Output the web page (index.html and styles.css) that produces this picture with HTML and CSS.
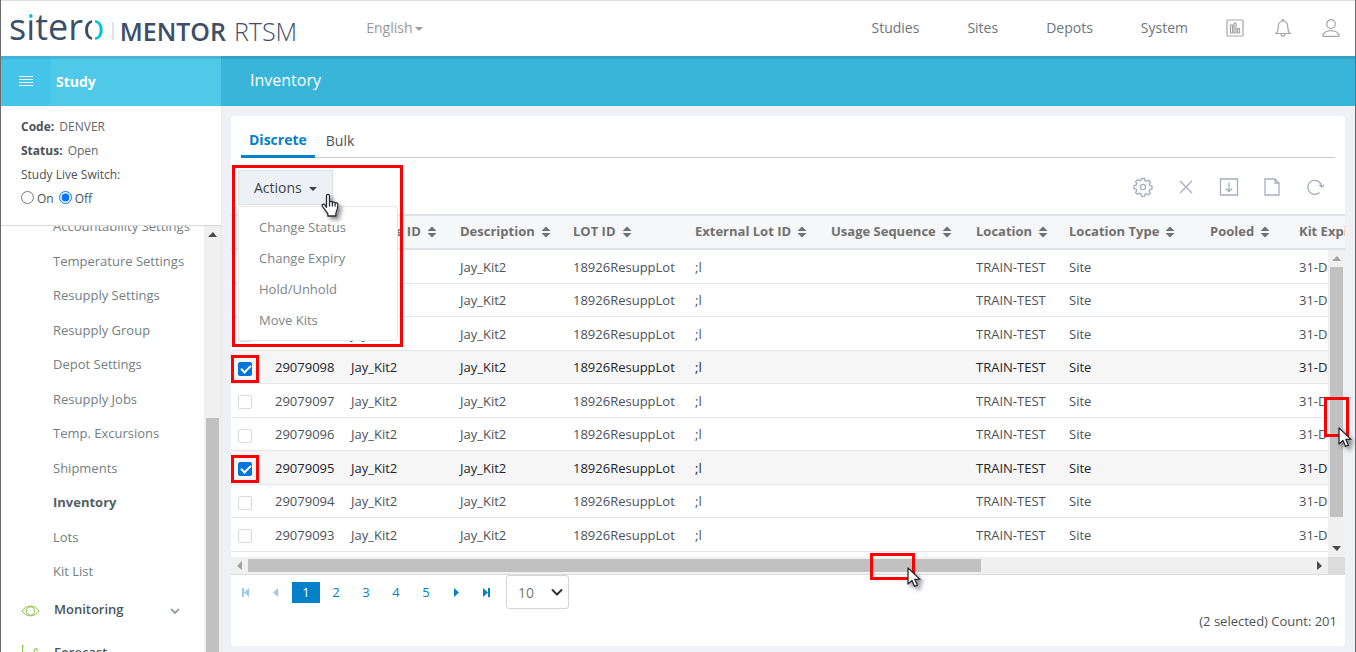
FILE: index.html
```html
<!DOCTYPE html>
<html lang="en">
  <head>
    <meta charset="UTF-8" />
    <meta name="viewport" content="width=device-width, initial-scale=1.0" />
    <title>Inventory | Mentor RTSM</title>
    <link rel="stylesheet" href="styles.css">
  </head>
  <body>
    <svg class="sprite" aria-hidden="true">
      <symbol id="sort" viewBox="0 0 10 12">
        <path d="M5 0.5 9.5 5H0.5zM5 11.5 9.5 7H0.5z" fill="currentColor" />
      </symbol>
      <symbol id="arrow-cursor" viewBox="0 0 14 21">
        <path d="M1 1v16l4-3.6 2.6 6 2.8-1.2-2.6-5.8H13z" fill="#fff" stroke="#2b2b3a" stroke-width="1.3" stroke-linejoin="round" />
      </symbol>
    </svg>

    <header class="top-bar">
      <a class="logo" href="#">
        <span class="logo-name">s<span class="logo-i">i</span>ter<span class="logo-o">o</span></span>
        <span class="logo-line"></span>
        <span class="logo-product"><b>MENTOR</b><span>RTSM</span></span>
      </a>
      <button class="language">English<span class="caret"></span></button>
      <nav class="top-nav">
        <a href="#">Studies</a>
        <a href="#">Sites</a>
        <a href="#">Depots</a>
        <a href="#">System</a>
      </nav>
      <div class="top-icons">
        <button aria-label="Reports">
          <svg width="18" height="18" viewBox="0 0 18 18"><rect x="1" y="1" width="16" height="16" rx="1" /><path d="M4.5 6h2v8h-2zM8 4h2v10H8zM11.5 9.500h2V14h-2z" /></svg>
        </button>
        <button aria-label="Notifications">
          <svg width="16" height="20" viewBox="0 0 16 20"><path d="M1 15.500h14c-1.800-1.600-2.200-3-2.200-6.500 0-3.600-1.600-6-4.800-6S3.200 5.400 3.200 9c0 3.500-.4 4.900-2.200 6.500zM6 15.500c0 3.600 4 3.600 4 0M7 3c0-2 2-2 2 0" /></svg>
        </button>
        <button aria-label="Account">
          <svg width="18" height="18" viewBox="0 0 18 18"><circle cx="9" cy="5" r="4.300" /><path d="M1 17.300c0-7.600 16-7.600 16 0z" /></svg>
        </button>
      </div>
    </header>

    <div class="title-bar">
      <button class="menu-btn" aria-label="Toggle menu">
        <svg width="14" height="12" viewBox="0 0 14 12"><path d="M0 1.500h14M0 4.500h14M0 7.500h14M0 10.500h14" /></svg>
      </button>
      <h2>Study</h2>
      <h1>Inventory</h1>
    </div>

    <div class="layout">
      <aside class="sidebar">
        <div class="study-info">
          <p><b>Code:</b> <span>DENVER</span></p>
          <p><b>Status:</b> <span>Open</span></p>
          <p>Study Live Switch:</p>
          <div class="switch">
            <input type="radio" name="live" id="liveOn" /><label for="liveOn">On</label>
            <input type="radio" name="live" id="liveOff" checked /><label for="liveOff">Off</label>
          </div>
        </div>
        <div class="side-scroll">
          <div class="side-menu">
            <ul>
              <li><a href="#">Accountability Settings</a></li>
              <li><a href="#">Temperature Settings</a></li>
              <li><a href="#">Resupply Settings</a></li>
              <li><a href="#">Resupply Group</a></li>
              <li><a href="#">Depot Settings</a></li>
              <li><a href="#">Resupply Jobs</a></li>
              <li><a href="#">Temp. Excursions</a></li>
              <li><a href="#">Shipments</a></li>
              <li><a class="active" href="#">Inventory</a></li>
              <li><a href="#">Lots</a></li>
              <li><a href="#">Kit List</a></li>
            </ul>
            <a class="side-group" href="#">
              <svg class="group-icon" width="19" height="12" viewBox="0 0 19 12"><path d="M1 6c4.500-6.500 12.500-6.500 17 0-4.500 6.500-12.500 6.500-17 0z" /><circle cx="9.500" cy="6" r="4.200" /></svg>
              <span>Monitoring</span>
              <svg class="chevron" width="10" height="6" viewBox="0 0 10 6"><path d="M1 1l4 4 4-4" /></svg>
            </a>
            <a class="side-group" href="#">
              <svg class="group-icon" width="19" height="18" viewBox="0 0 19 18"><path d="M1.500 0v17h16M1 1h2M2 14l5 2 4-3 3-9M13 4.500l3-1v3" /></svg>
              <span>Forecast</span>
            </a>
          </div>
          <div class="v-scroll" aria-hidden="true">
            <span class="arrow up"></span>
            <span class="side-thumb"></span>
          </div>
        </div>
      </aside>

      <main class="content">
        <section class="panel">
          <div class="tabs">
            <button class="tab active">Discrete</button>
            <button class="tab">Bulk</button>
          </div>

          <div class="toolbar">
            <div class="actions">
              <button class="actions-btn">Actions <span class="caret"></span></button>
              <div class="dropdown">
                <a href="#">Change Status</a>
                <a href="#">Change Expiry</a>
                <a href="#">Hold/Unhold</a>
                <a href="#">Move Kits</a>
              </div>
              <span class="mark mark-actions"></span>
              <svg class="cursor hand" width="18" height="25" viewBox="0 0 18 25"><path d="M5.500 14.500V3c0-2.300 3-2.300 3 0v6.500c.3-1.500 2.700-1.400 2.900.3.500-1.200 2.500-1 2.700.5.600-1 2.700-.6 2.700 1.200 0 4.500-.6 6.300-1.900 8.500V23H6.800v-2.500C5 18 3 16 1.400 13.400c-.9-1.700 1.200-3.200 2.500-1.500zM8.500 9.500v4M11.400 10v3.500M14.100 10.500v3" fill="#fff" stroke="#2b2b3a" stroke-width="1.300" stroke-linejoin="round" /></svg>
            </div>
            <div class="tools">
              <button aria-label="Settings">
                <svg width="20" height="20" viewBox="0 0 20 20"><circle cx="10" cy="10" r="2.600" /><path d="M8.500 1.500h3l.5 2.200 1.400.6 2-1.200 2 2-1.200 2 .6 1.400 2.200.5v3l-2.200.5-.6 1.400 1.200 2-2 2-2-1.200-1.400.6-.5 2.200h-3L8 16.800l-1.400-.6-2 1.200-2-2 1.200-2-.6-1.400L1 11.500v-3L3.200 8l.6-1.400-1.200-2 2-2 2 1.200L8 3.200z" /></svg>
              </button>
              <button aria-label="Clear">
                <svg width="20" height="20" viewBox="0 0 20 20"><path d="M4 4l12 12M16 4L4 16" /></svg>
              </button>
              <button aria-label="Download">
                <svg width="20" height="20" viewBox="0 0 20 20"><path d="M1.500 2h17v16h-17zM10 5.500v9M6.800 11.500l3.200 3 3.200-3" /></svg>
              </button>
              <button aria-label="New document">
                <svg width="20" height="20" viewBox="0 0 20 20"><path d="M3 2h10l4 4v12H3zM13 2v4h4" /></svg>
              </button>
              <button aria-label="Refresh">
                <svg width="20" height="20" viewBox="0 0 20 20"><path d="M14.500 15.500a7 7 0 1 1 2.200-6.200M14.200 8l2.600 2.200L19 7.600" /></svg>
              </button>
            </div>
          </div>

          <div class="grid-head">
            <table>
              <colgroup><col class="c-check" /><col class="c-kit" /><col class="c-type" /><col class="c-desc" /><col class="c-lot" /><col class="c-ext" /><col class="c-usage" /><col class="c-loc" /><col class="c-loctype" /><col class="c-pooled" /><col class="c-expiry" /></colgroup>
              <thead>
                <tr>
                  <th></th>
                  <th>Kit ID</th>
                  <th>Kit Type ID<svg class="sort"><use href="#sort" /></svg></th>
                  <th>Description<svg class="sort"><use href="#sort" /></svg></th>
                  <th>LOT ID<svg class="sort"><use href="#sort" /></svg></th>
                  <th>External Lot ID<svg class="sort"><use href="#sort" /></svg></th>
                  <th>Usage Sequence<svg class="sort"><use href="#sort" /></svg></th>
                  <th>Location<svg class="sort"><use href="#sort" /></svg></th>
                  <th>Location Type<svg class="sort"><use href="#sort" /></svg></th>
                  <th>Pooled<svg class="sort"><use href="#sort" /></svg></th>
                  <th>Kit Expiry</th>
                </tr>
              </thead>
            </table>
          </div>

          <div class="grid-body">
            <div class="grid-view">
              <table>
                <colgroup><col class="c-check" /><col class="c-kit" /><col class="c-type" /><col class="c-desc" /><col class="c-lot" /><col class="c-ext" /><col class="c-usage" /><col class="c-loc" /><col class="c-loctype" /><col class="c-pooled" /><col class="c-expiry" /></colgroup>
                <tbody>
                  <tr>
                    <td><input type="checkbox" aria-label="Select 29079101" /></td>
                    <td>29079101</td><td>Jay_Kit2</td><td>Jay_Kit2</td><td>18926ResuppLot</td><td>;l</td><td></td><td>TRAIN-TEST</td><td>Site</td><td></td><td>31-Dec</td>
                  </tr>
                  <tr>
                    <td><input type="checkbox" aria-label="Select 29079100" /></td>
                    <td>29079100</td><td>Jay_Kit2</td><td>Jay_Kit2</td><td>18926ResuppLot</td><td>;l</td><td></td><td>TRAIN-TEST</td><td>Site</td><td></td><td>31-Dec</td>
                  </tr>
                  <tr>
                    <td><input type="checkbox" aria-label="Select 29079099" /></td>
                    <td>29079099</td><td>Jay_Kit2</td><td>Jay_Kit2</td><td>18926ResuppLot</td><td>;l</td><td></td><td>TRAIN-TEST</td><td>Site</td><td></td><td>31-Dec</td>
                  </tr>
                  <tr class="selected">
                    <td><input type="checkbox" aria-label="Select 29079098" checked /><span class="mark mark-check"></span></td>
                    <td>29079098</td><td>Jay_Kit2</td><td>Jay_Kit2</td><td>18926ResuppLot</td><td>;l</td><td></td><td>TRAIN-TEST</td><td>Site</td><td></td><td>31-Dec</td>
                  </tr>
                  <tr>
                    <td><input type="checkbox" aria-label="Select 29079097" /></td>
                    <td>29079097</td><td>Jay_Kit2</td><td>Jay_Kit2</td><td>18926ResuppLot</td><td>;l</td><td></td><td>TRAIN-TEST</td><td>Site</td><td></td><td>31-Dec</td>
                  </tr>
                  <tr>
                    <td><input type="checkbox" aria-label="Select 29079096" /></td>
                    <td>29079096</td><td>Jay_Kit2</td><td>Jay_Kit2</td><td>18926ResuppLot</td><td>;l</td><td></td><td>TRAIN-TEST</td><td>Site</td><td></td><td>31-Dec</td>
                  </tr>
                  <tr class="selected">
                    <td><input type="checkbox" aria-label="Select 29079095" checked /><span class="mark mark-check"></span></td>
                    <td>29079095</td><td>Jay_Kit2</td><td>Jay_Kit2</td><td>18926ResuppLot</td><td>;l</td><td></td><td>TRAIN-TEST</td><td>Site</td><td></td><td>31-Dec</td>
                  </tr>
                  <tr>
                    <td><input type="checkbox" aria-label="Select 29079094" /></td>
                    <td>29079094</td><td>Jay_Kit2</td><td>Jay_Kit2</td><td>18926ResuppLot</td><td>;l</td><td></td><td>TRAIN-TEST</td><td>Site</td><td></td><td>31-Dec</td>
                  </tr>
                  <tr>
                    <td><input type="checkbox" aria-label="Select 29079093" /></td>
                    <td>29079093</td><td>Jay_Kit2</td><td>Jay_Kit2</td><td>18926ResuppLot</td><td>;l</td><td></td><td>TRAIN-TEST</td><td>Site</td><td></td><td>31-Dec</td>
                  </tr>
                </tbody>
              </table>
            </div>
            <div class="v-scroll" aria-hidden="true">
              <span class="arrow up dim"></span>
              <span class="grid-thumb">
                <span class="mark mark-v"></span>
                <svg class="cursor cursor-v" width="14" height="21"><use href="#arrow-cursor" /></svg>
              </span>
              <span class="arrow down"></span>
            </div>
          </div>

          <div class="h-scroll" aria-hidden="true">
            <span class="arrow left dim"></span>
            <div class="h-track">
              <span class="h-thumb">
                <span class="mark mark-h"></span>
                <svg class="cursor cursor-h" width="14" height="21"><use href="#arrow-cursor" /></svg>
              </span>
            </div>
            <span class="arrow right"></span>
            <span class="corner"></span>
          </div>

          <div class="pager">
            <button class="off" aria-label="First page"><svg width="8" height="9" viewBox="0 0 8 9"><path d="M0 0h2v9H0zM7 0v9L2 4.500z" /></svg></button>
            <button class="off" aria-label="Previous page"><svg width="8" height="9" viewBox="0 0 8 9"><path d="M6 0v9L1 4.500z" /></svg></button>
            <button class="current">1</button>
            <button>2</button>
            <button>3</button>
            <button>4</button>
            <button>5</button>
            <button aria-label="Next page"><svg width="8" height="9" viewBox="0 0 8 9"><path d="M2 0v9l5-4.500z" /></svg></button>
            <button aria-label="Last page"><svg width="8" height="9" viewBox="0 0 8 9"><path d="M6 0h2v9H6zM1 0v9l5-4.500z" /></svg></button>
            <div class="page-size">
              <select aria-label="Rows per page">
                <option>10</option>
                <option>25</option>
                <option>50</option>
              </select>
              <svg width="12" height="8" viewBox="0 0 12 8"><path d="M1 1.500l5 5 5-5" /></svg>
            </div>
          </div>
          <p class="count">(2 selected) Count: 201</p>
        </section>
      </main>
    </div>
  </body>
</html>
```
FILE: styles.css
```css
* {
  margin: 0;
  padding: 0;
  box-sizing: border-box;
}
body {
  display: flex;
  flex-direction: column;
  height: 100vh;
  overflow: hidden;
  background: #eff1f6;
  border-left: 1px solid #6b6b6b;
  border-right: 1px solid #6b6b6b;
  color: #4c5257;
  font-family: "Open Sans", sans-serif;
  font-size: 13px;
}
button,
select {
  font: inherit;
  color: inherit;
  background: none;
  border: none;
  cursor: pointer;
}
a {
  color: inherit;
  text-decoration: none;
}
ul {
  list-style: none;
}
svg {
  display: block;
  fill: none;
}
.sprite {
  position: absolute;
  width: 0;
  height: 0;
}
.caret {
  display: inline-block;
  border: 4px solid transparent;
  border-top-color: currentColor;
  border-bottom: none;
  vertical-align: middle;
}

/* header */
.top-bar {
  display: flex;
  align-items: center;
  flex-shrink: 0;
  height: 56px;
  padding: 0 15px 2px 8px;
  background: #fff;
  border-top: 1px solid #dedede;
  color: #6c757d;
  font-size: 14px;
}
.logo {
  display: flex;
  align-items: center;
  padding-top: 2px;
  color: #3b5068;
}
.logo-name {
  padding-bottom: 4px;
  font-size: 36px;
  font-weight: 500;
  line-height: 44px;
}
.logo-i,
.logo-o {
  color: transparent;
  -webkit-background-clip: text;
  background-clip: text;
}
.logo-i {
  background-image: linear-gradient(#00c4d4 38%, #3b5068 38%);
}
.logo-o {
  background-image: linear-gradient(90deg, #3b5068 42%, transparent 42% 55%, #00c4d4 55%);
}
.logo-line {
  width: 2px;
  height: 18px;
  margin: 4px 6px 0 7px;
  background: #e3e3e3;
}
.logo-product {
  display: flex;
  gap: 8px;
  padding-top: 4px;
  font-size: 25px;
  line-height: 34px;
}
.logo-product b {
  font-weight: 600;
}
.logo-product span {
  font-weight: 300;
}
.language {
  margin-left: 69px;
  color: #999;
}
.language .caret {
  margin-left: 2px;
}
.top-nav {
  display: flex;
  gap: 48px;
  margin-left: auto;
}
.top-icons {
  display: flex;
  align-items: center;
  gap: 31px;
  margin-left: 38px;
}
.top-icons svg {
  stroke: #a5a5a5;
  stroke-width: 1.2;
}

/* title bar */
.title-bar {
  display: flex;
  align-items: center;
  flex-shrink: 0;
  height: 50px;
  background: #38b5d9;
  box-shadow: inset 0 3px 0 #34a2c3;
  color: #fff;
}
.menu-btn {
  width: 50px;
  height: 50px;
  padding: 0 18px;
  background: #44c4e9;
  box-shadow: inset 0 3px 0 #3fb4d5;
}
.menu-btn svg {
  stroke: #fff;
}
.title-bar h2 {
  width: 170px;
  height: 50px;
  padding: 1px 0 0 5px;
  background: #50c8e8;
  box-shadow: inset 0 3px 0 #48b5d2;
  font-size: 14px;
  line-height: 50px;
}
.title-bar h1 {
  padding: 0 0 2px 29px;
  font-size: 16px;
  font-weight: 400;
}

/* sidebar */
.layout {
  display: flex;
  flex: 1;
  min-height: 0;
}
.sidebar {
  display: flex;
  flex-direction: column;
  flex-shrink: 0;
  width: 220px;
  background: #fff;
}
.study-info {
  height: 120px;
  padding: 9px 20px 0;
  border-bottom: 1px solid #d9d9d9;
  font-size: 12px;
  line-height: 24px;
}
.study-info span {
  margin-left: 2px;
  color: #666;
}
.switch {
  display: flex;
  align-items: center;
}
.switch input {
  width: 13px;
  height: 13px;
  margin: 0 3px 4px 0;
  accent-color: #0075ff;
}
.switch label {
  margin-right: 5px;
}
.side-scroll {
  display: flex;
  flex: 1;
  min-height: 0;
}
.side-menu {
  flex: 1;
  overflow: hidden;
  color: #73807f;
}
.side-menu ul {
  margin-top: -17px;
}
.side-menu li {
  height: 34px;
  padding-left: 52px;
  line-height: 34px;
}
.side-menu li:nth-child(odd) {
  height: 35px;
}
.side-menu .active {
  color: #55605f;
  font-weight: 700;
}
.side-group {
  display: flex;
  align-items: center;
  height: 43px;
  padding: 0 24px 3px 20px;
  color: #4a5556;
  font-weight: 600;
}
.side-group span {
  margin-left: 14px;
}
.group-icon {
  margin-top: 3px;
  stroke: #8bc34a;
}
.chevron {
  margin: 4px 0 0 auto;
  stroke: #9aa3a3;
  stroke-width: 2;
}

/* scrollbars */
.v-scroll {
  display: flex;
  flex-direction: column;
  align-items: center;
  flex-shrink: 0;
  width: 17px;
  background: #f0f0f0;
}
.arrow {
  flex-shrink: 0;
  width: 17px;
  height: 17px;
  background: #4a4a4a;
}
.arrow.dim {
  background-color: #a0a0a0;
}
.arrow.up {
  clip-path: polygon(4px 11px, 13px 11px, 9px 6px);
}
.arrow.down {
  clip-path: polygon(4px 6px, 13px 6px, 9px 11px);
}
.arrow.left {
  clip-path: polygon(11px 4px, 11px 13px, 6px 9px);
}
.arrow.right {
  clip-path: polygon(6px 4px, 6px 13px, 11px 9px);
}
.side-thumb {
  flex: 1;
  width: 13px;
  margin-top: 175px;
  background: #c1c1c1;
}
.grid-thumb {
  position: relative;
  width: 13px;
  height: 250px;
  margin-bottom: auto;
  background: #c1c1c1;
}
.h-scroll {
  display: flex;
  align-items: center;
  height: 18px;
  background: #f0f0f0;
  border-bottom: 1px solid #dcdcdc;
}
.h-track {
  flex: 1;
}
.h-thumb {
  position: relative;
  display: block;
  width: 69%;
  height: 13px;
  background: #c1c1c1;
}
.corner {
  width: 17px;
  height: 17px;
  background: #dcdcdc;
}

/* panel */
.content {
  flex: 1;
  min-width: 0;
  padding: 10px 10px 6px 9px;
  border-left: 1px solid #e6e9ee;
}
.panel {
  height: 100%;
  background: #fff;
  border-radius: 4px;
}
.tabs {
  display: flex;
  align-items: flex-end;
  height: 42px;
  margin: 0 10px;
  border-bottom: 1px solid #ccc;
}
.tab {
  height: 33px;
  padding: 0 11px;
  font-size: 14px;
}
.tab.active {
  height: 34px;
  margin-bottom: -1px;
  padding: 0 8px;
  border-bottom: 3px solid #0481c9;
  color: #0481c9;
  font-weight: 700;
}
.toolbar {
  display: flex;
  align-items: center;
  justify-content: space-between;
  height: 56px;
  padding: 2px 20px 0 7px;
}
.actions {
  position: relative;
  z-index: 2;
}
.actions-btn {
  height: 35px;
  padding: 0 15px;
  background: #edf0f4;
  border: 1px solid #dde1e6;
  color: #3d4348;
  font-size: 14px;
}
.actions-btn .caret {
  margin-left: 4px;
}
.dropdown {
  position: absolute;
  top: 36px;
  left: 0;
  width: 160px;
  padding: 5px 0 4px;
  background: #fff;
  border: 1px solid #e4e8eb;
  border-radius: 4px;
  color: #7b8588;
}
.dropdown a {
  display: block;
  padding: 0 20px;
  line-height: 31px;
}
.mark {
  position: absolute;
  border: 3px solid #fe0000;
}
.mark-actions {
  top: -5px;
  left: -6px;
  width: 171px;
  height: 182px;
}
.mark-check {
  top: 4px;
  left: 0;
  width: 28px;
  height: 28px;
}
.mark-v {
  top: 130px;
  left: -6px;
  width: 25px;
  height: 40px;
}
.mark-h {
  top: -6px;
  right: 66px;
  width: 45px;
  height: 27px;
}
.cursor {
  position: absolute;
  z-index: 3;
  filter: drop-shadow(3px 3px 2px rgba(0, 0, 0, 0.45));
}
.hand {
  top: 23px;
  left: 83px;
}
.cursor-v {
  top: 160px;
  left: 8px;
}
.cursor-h {
  top: 8px;
  right: 60px;
}
.tools {
  display: flex;
  gap: 23px;
}
.tools svg {
  stroke: #a3aebd;
  stroke-width: 1.3;
}

/* table */
table {
  width: 1200px;
  table-layout: fixed;
  border-spacing: 0;
}
.c-check { width: 36px; }
.c-kit { width: 76px; }
.c-type { width: 109px; }
.c-desc { width: 113px; }
.c-lot { width: 122px; }
.c-ext { width: 136px; }
.c-usage { width: 145px; }
.c-loc { width: 93px; }
.c-loctype { width: 141px; }
.c-pooled { width: 89px; }
.c-expiry { width: 140px; }
.grid-head {
  overflow: hidden;
  background: #f6f7f9;
  border-top: 2px solid #dee2e6;
  border-bottom: 2px solid #dee2e6;
}
th {
  height: 32px;
  padding: 0 8px 2px;
  color: #707070;
  text-align: left;
  white-space: nowrap;
}
.sort {
  display: inline-block;
  width: 10px;
  height: 12px;
  margin-left: 6px;
  vertical-align: -2px;
}
.grid-body {
  display: flex;
}
.grid-view {
  flex: 1;
  min-width: 0;
  overflow: hidden;
  padding-bottom: 5px;
}
td {
  position: relative;
  height: 33px;
  padding: 0 8px;
  border-bottom: 1px solid #e4e6e8;
}
tr:nth-child(odd) td {
  height: 34px;
}
td:first-child {
  padding: 3px 7px 0;
}
.selected {
  background: #f6f6f6;
  color: #212529;
}
input[type="checkbox"] {
  appearance: none;
  display: block;
  width: 14px;
  height: 14px;
  border: 1px solid #d9d9d9;
  border-radius: 2px;
  background: #fff;
}
input[type="checkbox"]:checked {
  background: #0475da;
  border-color: #0475da;
}
input[type="checkbox"]:checked::after {
  content: "";
  display: block;
  width: 8px;
  height: 4px;
  margin: 2px;
  border: solid #fff;
  border-width: 0 0 2px 2px;
  transform: rotate(-45deg);
}

/* pager */
.pager {
  display: flex;
  align-items: center;
  gap: 2px;
  height: 34px;
  padding-left: 1px;
  color: #0481c9;
}
.pager button {
  display: flex;
  align-items: center;
  justify-content: center;
  width: 28px;
  height: 21px;
}
.pager button svg {
  fill: #0481c9;
}
.pager .off {
  opacity: 0.4;
}
.pager .current {
  background: #0481c9;
  color: #fff;
}
.page-size {
  display: flex;
  align-items: center;
  width: 63px;
  height: 34px;
  margin-left: 4px;
  border: 1px solid #d5d5d5;
  border-radius: 3px;
  color: #777;
}
.page-size select {
  appearance: none;
  width: 62px;
  height: 32px;
  padding-left: 11px;
  font-size: 14px;
}
.page-size svg {
  flex-shrink: 0;
  margin: 0 5px 0 -17px;
  pointer-events: none;
  stroke: #333;
  stroke-width: 2;
}
.count {
  padding: 3px 8px 0 0;
  text-align: right;
}
```
